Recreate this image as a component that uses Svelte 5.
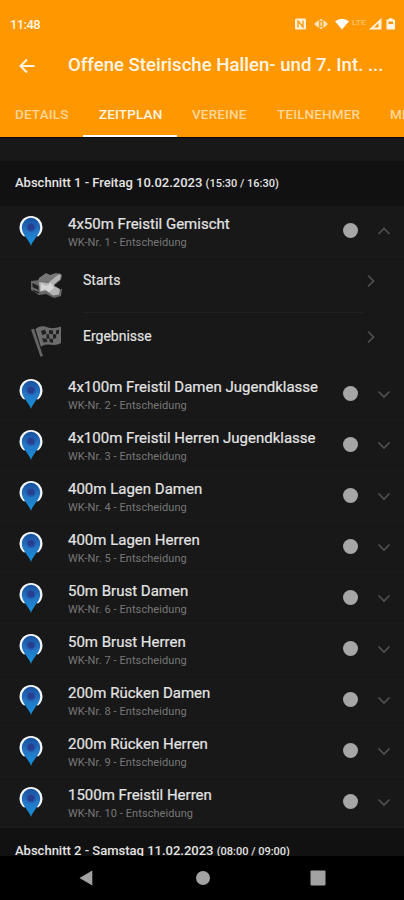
<script>
  const tabs = ['DETAILS', 'ZEITPLAN', 'VEREINE', 'TEILNEHMER', 'MELDUNGEN'];
  const events = [
    '4x50m Freistil Gemischt',
    '4x100m Freistil Damen Jugendklasse',
    '4x100m Freistil Herren Jugendklasse',
    '400m Lagen Damen',
    '400m Lagen Herren',
    '50m Brust Damen',
    '50m Brust Herren',
    '200m Rücken Damen',
    '200m Rücken Herren',
    '1500m Freistil Herren'
  ];
  let open = $state(0);
</script>

{#snippet chevron(d)}
  <svg class="chev" width="14" height="14" viewBox="0 0 14 14"><path {d} /></svg>
{/snippet}

<div class="screen">
  <header>
    <div class="status">
      <span>11:48</span>
      <svg width="104" height="16" viewBox="0 0 104 16">
        <rect x="1" y="2.5" width="11" height="11" rx="1.5" fill="#fff1dc" />
        <path d="M4 11.500V5l5 6V4.500" fill="none" stroke="#ff9800" stroke-width="1.300" />
        <path d="M20 8l4.500-4v8zM34 8l-4.500-4v8z" fill="#ffe3b8" />
        <path d="M27.200 2.600l4 5.400-4 5.400-4-5.400z" fill="#ffe9c8" />
        <ellipse cx="27.200" cy="8" rx="2.300" ry="3.200" fill="#ff9800" />
        <path d="M27.200 6v4" stroke="#fff1dc" stroke-width="1.300" />
        <path d="M41 5.200q7-5 14 0L48 13.500z" fill="#fff" />
        <text x="58" y="8.500" textLength="14" lengthAdjust="spacingAndGlyphs">LTE</text>
        <path d="M87.500 2v11.500H75z" fill="#fff1dc" />
        <path d="M84.500 7v4.500h-4.500z" fill="#ff9800" />
        <path d="M95 2.200h3.500v1.300h1.700q.8 0 .8.800v8.400q0 .8-.8.800h-6.900q-.8 0-.8-.8V4.300q0-.8.800-.8h1.700z" fill="#fff5e6" />
        <path d="M94.500 5.500h4.500v2.500h-4.500z" fill="#ff9800" />
      </svg>
    </div>
    <div class="bar">
      <svg width="18" height="18" viewBox="0 0 18 18"><path d="M16.500 9H3M9 2.500L2.500 9 9 15.500" /></svg>
      <h1>Offene Steirische Hallen- und 7. Int. ...</h1>
    </div>
    <nav>
      {#each tabs as tab, i}
        <span class="tab t{i}" class:active={i === 1}>{tab}</span>
      {/each}
    </nav>
  </header>

  <main>
    <h2>Abschnitt 1 - Freitag 10.02.2023 <small>(15:30 / 16:30)</small></h2>
    {#each events as event, i}
      <div class="row">
        <svg class="pin" width="26" height="34" viewBox="0 0 26 34">
          <defs>
            <linearGradient id="g{i}" x1="0" y1="0" x2="0" y2="1">
              <stop offset="0" stop-color="#174f9c" />
              <stop offset=".45" stop-color="#2474c2" />
              <stop offset="1" stop-color="#1593dc" />
            </linearGradient>
          </defs>
          <path d="M6 22.500A11.500 11.500 0 1 1 20 22.500L13 20z" fill="#f1f5fa" />
          <path d="M13 32C11.500 26 3.800 21 3.800 13.500a9.200 9.700 0 0 1 18.400 0C22.200 21 14.500 26 13 32z" fill="url(#g{i})" />
          <circle cx="13" cy="13" r="5" fill="#2459ad" />
          <circle cx="13" cy="13" r="3.300" fill="#263f8e" />
        </svg>
        <div class="label">
          <strong>{event}</strong>
          <span>WK-Nr. {i + 1} - Entscheidung</span>
        </div>
        <i class="dot"></i>
        <button aria-label="Umschalten" onclick={() => (open = open === i ? -1 : i)}>
          {@render chevron(open === i ? 'M1.500 10L7 4.500l5.500 5.500' : 'M1.500 4.500L7 10l5.500-5.500')}
        </button>
      </div>
      {#if open === i}
        <div class="sub">
          <svg class="ico" width="32" height="32" viewBox="0 0 32 32">
            <path d="M1 11l9-1 6-6 5 2 8-3 3 2-1 5-4 3 1 4 4 2-1 7-7 2-8-4-7 1-8-5z" fill="#686868" />
            <path d="M9 8l7-5 4 2 6-2 4 2-9 6-10 1-3-1z" fill="#777" />
            <path d="M9 12l9 1 10-8 3-.5-1 5-5 4-1 3 6 2-1 6-6 1-7-5-6 1z" fill="#b4b4b4" />
            <path d="M2.500 13l6 3v4l-6-3zM3 20l6 2v1.500l-6-2z" fill="#202020" />
            <path d="M11 13l5 3 5-3 3 5-5 4-4-3-4 2z" fill="#d4d4d4" />
            <path d="M24 15l7-4v9z" fill="#181818" />
          </svg>
          <div class="sublabel">Starts</div>
          {@render chevron('M4 1.500L9.500 7 4 12.500')}
        </div>
        <div class="sub last">
          <svg class="ico flag" width="32" height="32" viewBox="0 0 32 32">
            <path d="M1 4.500l3-.8L13 31l-2.500.8z" fill="#656565" />
            <path d="M5.500 4C10 .5 14 1 18 2.500s8 .5 13-1V18c-5 3-9 1.500-12.500 1.500S13 20 11 22z" fill="#6c6c6c" />
            <path d="M11 6l4-1.500 1.500 4-4.200 1.700zM19 5l4 .5v4l-4-.8zM26 5.500l3-1v4l-3 1zM16.500 9l2.500.5.5 4-3 .5zM23 9.500l3.200-.5v4l-3.200 1zM12 13l4.500 1 1 3-4 .5zM19.500 13.500l3.500.5v4l-3.500-1z" fill="#222" />
          </svg>
          <div class="sublabel">Ergebnisse</div>
          {@render chevron('M4 1.500L9.500 7 4 12.500')}
        </div>
      {/if}
    {/each}
    <h2 class="second">Abschnitt 2 - Samstag 11.02.2023 <small>(08:00 / 09:00)</small></h2>
  </main>

  <footer>
    <svg width="14" height="18" viewBox="0 0 14 18"><path d="M13.300 1.500v15L.5 9z" /></svg>
    <svg width="16" height="16" viewBox="0 0 16 16"><circle cx="8" cy="8" r="7" /></svg>
    <svg width="16" height="16" viewBox="0 0 16 16"><rect x=".5" y=".5" width="15" height="15" rx="1" /></svg>
  </footer>
</div>

<style>
  :global(body) { margin: 0; background: #000; }
  .screen {
    width: 404px; height: 900px; overflow: hidden;
    display: flex; flex-direction: column;
    font-family: Roboto, sans-serif; background: #181818; color: #e4e4e4;
  }
  header { flex: none; height: 137px; background: #ff9800; color: #fff5e6; display: flex; flex-direction: column; border-bottom: 1px solid #05070f; }
  .status { display: flex; justify-content: space-between; align-items: center; height: 48px; padding: 0 6px 0 10px; font-size: 13px; letter-spacing: -.6px; font-weight: 500; }
  .status text { font-size: 7px; letter-spacing: 0; fill: #ffc36b; }
  .bar { display: flex; align-items: center; height: 36px; padding-left: 18px; gap: 32px; }
  .bar path { fill: none; stroke: #fff5e6; stroke-width: 2; }
  h1 { margin: 0 0 2px; font-size: 18.600px; font-weight: 500; white-space: nowrap; }
  nav { display: flex; height: 53px; overflow: hidden; }
  .tab { flex: none; box-sizing: border-box; padding: 20px 0 0 15px; height: 53px; font-size: 13.500px; letter-spacing: .15px; line-height: 20px; font-weight: 500; color: #ffd699; white-space: nowrap; }
  .t0 { width: 83px; }
  .t1 { width: 94px; padding-left: 16px; border-bottom: 2px solid #fff; }
  .t2 { width: 85px; }
  .t3 { width: 113px; }
  .tab.active { color: #fff5e6; }
  main { flex: 1; min-height: 0; overflow: hidden; padding-top: 23px; }
  h2 { margin: 0; height: 45px; line-height: 44px; padding-left: 15px; background: #111; font-size: 13px; font-weight: 500; white-space: nowrap; }
  .second { line-height: 46px; }
  small { font-size: 11px; }
  .row { display: flex; align-items: center; height: 51px; box-sizing: border-box; border-bottom: 1px solid #1b1b1b; }
  .pin { margin: -1px 0 0 18px; flex: none; }
  .label { margin: 3px 0 0 24px; width: 275px; flex: none; display: flex; flex-direction: column; white-space: nowrap; }
  .label strong { font-size: 15px; line-height: 19px; font-weight: 400; -webkit-text-stroke: .2px; }
  .label span { font-size: 11px; letter-spacing: .08px; line-height: 17px; color: #777; }
  .dot { width: 15px; height: 15px; border-radius: 50%; background: #a6a6a6; flex: none; margin-top: -2px; }
  button { all: unset; margin-left: 19px; display: flex; }
  .chev { flex: none; }
  .chev path { fill: none; stroke: #505050; stroke-width: 1.700; }
  .sub { display: flex; height: 56px; align-items: center; }
  .ico { margin: 1px 0 0 30px; flex: none; }
  .flag { margin-top: -1px; }
  .sublabel { width: 281px; margin-left: 21px; box-sizing: border-box; height: 56px; line-height: 46px; font-size: 14px; -webkit-text-stroke: .15px; border-bottom: 1px solid #202020; }
  .sub .chev { margin-top: -9px; }
  .last .sublabel { border-bottom-color: transparent; line-height: 47px; }
  footer { height: 44px; flex: none; background: #000; display: flex; align-items: center; padding-left: 79px; }
  footer svg { fill: #a2a2a2; }
  footer svg:nth-child(2) { margin-left: 102px; }
  footer svg:nth-child(3) { margin-left: 99px; }
</style>
